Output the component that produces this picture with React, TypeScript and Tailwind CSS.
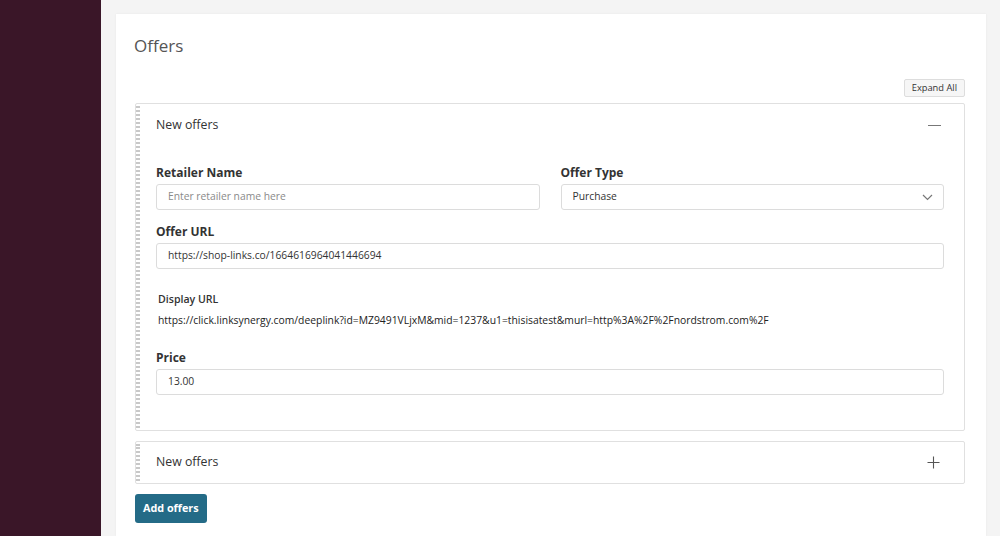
import React from "react";

const font = { fontFamily: '"Open Sans", "Noto Sans", sans-serif' };

function Label({ children }: { children: React.ReactNode }) {
  return <div className="text-[12px] font-bold text-[#333] leading-[14px] mb-[4px]">{children}</div>;
}

function Input({ value, placeholder }: { value?: string; placeholder?: string }) {
  return (
    <div className="h-[26px] border border-[#dcdcdc] rounded-[3px] flex items-center pl-[11px] text-[10.3px] bg-white">
      {value ? <span className="text-[#333]">{value}</span> : <span className="text-[#8a8a8a]">{placeholder}</span>}
    </div>
  );
}

function Handle() {
  return (
    <div className="w-[4px] self-stretch border-l-[2px] border-r-[2px] border-dotted border-[#c8c8c8] my-[2px]" />
  );
}

export default function App() {
  return (
    <div className="flex h-[536px] w-[1000px] overflow-hidden" style={font}>
      <div className="w-[101px] shrink-0 bg-[#3a1628]" />
      <div className="flex-1 bg-[#f4f4f4] pl-[15px] pr-[14px] pt-[14px]">
        <div className="bg-white h-full pl-[18px] pr-[21px] pt-[22px] shadow-[0_0_2px_rgba(0,0,0,0.06)]">
          <div className="text-[17px] leading-[20px] text-[#555]">Offers</div>
          <div className="flex justify-end mt-[23px]">
            <div className="h-[18px] px-[7px] flex items-center text-[9.3px] text-[#333] bg-[#f6f6f6] border border-[#ddd] rounded-[2px]">
              Expand All
            </div>
          </div>
          <div className="mt-[6px] ml-[1px] border border-[#e0e0e0] rounded-[2px] flex">
            <Handle />
            <div className="flex-1">
              <div className="h-[42px] flex items-center justify-between pl-[16px] pr-[23px]">
                <span className="text-[12.3px] text-[#333]">New offers</span>
                <span className="w-[13px] h-[1px] bg-[#777]" />
              </div>
              <div className="pl-[16px] pr-[20px] pt-[20px] pb-[35px]">
                <div className="flex gap-[21px]">
                  <div className="flex-1">
                    <Label>Retailer Name</Label>
                    <Input placeholder="Enter retailer name here" />
                  </div>
                  <div className="flex-1">
                    <Label>Offer Type</Label>
                    <div className="h-[26px] border border-[#dcdcdc] rounded-[3px] flex items-center justify-between pl-[11px] pr-[10px] text-[10.3px] text-[#333]">
                      <span>Purchase</span>
                      <svg width="11" height="7" viewBox="0 0 11 7" fill="none">
                        <path d="M1 1l4.5 4.5L10 1" stroke="#777" strokeWidth="1.2" />
                      </svg>
                    </div>
                  </div>
                </div>
                <div className="mt-[15px]">
                  <Label>Offer URL</Label>
                  <Input value="https://shop-links.co/1664616964041446694" />
                </div>
                <div className="mt-[23px] pl-[2px]">
                  <div className="text-[10.6px] font-semibold text-[#333] leading-[14px]">Display URL</div>
                  <div className="text-[10.35px] text-[#222] leading-[14px] mt-[7px]">
                    https://click.linksynergy.com/deeplink?id=MZ9491VLjxM&amp;mid=1237&amp;u1=thisisatest&amp;murl=http%3A%2F%2Fnordstrom.com%2F
                  </div>
                </div>
                <div className="mt-[24px]">
                  <Label>Price</Label>
                  <Input value="13.00" />
                </div>
              </div>
            </div>
          </div>
          <div className="mt-[10px] ml-[1px] border border-[#e0e0e0] rounded-[2px] flex h-[43px]">
            <Handle />
            <div className="flex-1 flex items-center justify-between pl-[16px] pr-[24px]">
              <span className="text-[12.3px] text-[#333]">New offers</span>
              <svg width="13" height="13" viewBox="0 0 13 13">
                <path d="M6.5 0.5v12M0.5 6.5h12" stroke="#555" strokeWidth="1.1" />
              </svg>
            </div>
          </div>
          <div className="mt-[10px] ml-[1px]">
            <div className="inline-flex items-center h-[29px] px-[8px] rounded-[3px] bg-[#246b87] text-white text-[10.8px] font-bold">
              Add offers
            </div>
          </div>
        </div>
      </div>
    </div>
  );
}
